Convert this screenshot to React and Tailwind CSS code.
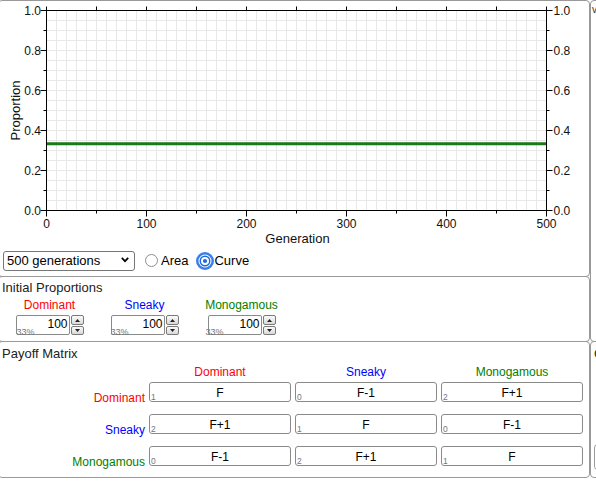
import React from "react";

const SPECIES = [
  { name: "Dominant", color: "text-[#ff0000]", col: "w-[95px]", pct: "left-[1px]" },
  { name: "Sneaky", color: "text-[#0000ff]", col: "w-[95px]", pct: "left-0" },
  { name: "Monogamous", color: "text-[#008000]", col: "w-[99px]", pct: "-left-[2px]" },
];

const MATRIX = [
  [["F", 1], ["F-1", 0], ["F+1", 2]],
  [["F+1", 2], ["F", 1], ["F-1", 0]],
  [["F-1", 0], ["F+1", 2], ["F", 1]],
];

function Chart() {
  const gx = (g) => 46.5 + g;
  const py = (p) => 210.5 - 200 * p;
  const vgrid = Array.from({ length: 49 }, (_, i) => gx(10 * (i + 1)));
  const hgrid = Array.from({ length: 19 }, (_, i) => 10.5 + 10 * (i + 1));
  const yTicks = Array.from({ length: 11 }, (_, i) => i / 10);
  const xTicks = Array.from({ length: 11 }, (_, i) => i * 50);

  return (
    <svg width="589" height="249" className="block ml-px">
      <g transform="translate(0,-1)">
        {vgrid.map((x) => (
          <line key={"v" + x} x1={x} x2={x} y1={10.5} y2={210.5} stroke="#e8e8e8" />
        ))}
        {hgrid.map((y) => (
          <line key={"h" + y} x1={46.5} x2={546.5} y1={y} y2={y} stroke="#e8e8e8" />
        ))}

        {/* three series sit on top of each other at 1/3 */}
        <line x1={gx(0)} x2={gx(500)} y1={py(1 / 3)} y2={py(1 / 3)} stroke="#1a7a1a" strokeWidth="3" />

        <rect x={46.5} y={10.5} width={500} height={200} fill="none" stroke="#000" />

        {yTicks.map((p, i) => {
          const major = i % 2 === 0;
          const len = major ? 6 : 3;
          return (
            <g key={"y" + i}>
              <line x1={46.5 - len} x2={46.5} y1={py(p)} y2={py(p)} stroke="#000" />
              <line x1={546.5} x2={546.5 + len} y1={py(p)} y2={py(p)} stroke="#000" />
              {major && (
                <>
                  <text x={41} y={py(p) + 4.3} fontSize="12" textAnchor="end" fill="#111">
                    {p.toFixed(1)}
                  </text>
                  <text x={553.5} y={py(p) + 4.3} fontSize="12" fill="#111">
                    {p.toFixed(1)}
                  </text>
                </>
              )}
            </g>
          );
        })}

        {xTicks.map((g, i) => {
          const major = i % 2 === 0;
          return (
            <g key={"x" + g}>
              <line x1={gx(g)} x2={gx(g)} y1={6.5} y2={10.5} stroke="#000" />
              <line x1={gx(g)} x2={gx(g)} y1={210.5} y2={210.5 + (major ? 6 : 3)} stroke="#000" />
              {major && (
                <text x={gx(g)} y={227.5} fontSize="12" textAnchor="middle" fill="#111">
                  {g}
                </text>
              )}
            </g>
          );
        })}

        <text x={297.5} y={242.5} fontSize="13" textAnchor="middle" fill="#111">
          Generation
        </text>
        <text
          x={0}
          y={0}
          fontSize="13"
          textAnchor="middle"
          fill="#111"
          transform="translate(20,110.5) rotate(-90)"
        >
          Proportion
        </text>
      </g>
    </svg>
  );
}

function Spinner() {
  return (
    <div className="flex flex-col gap-px ml-px">
      <div className="w-[13px] h-[10px] border border-[#7a7a7a] rounded-[2px] bg-linear-to-b from-[#fbfbfb] to-[#d9d9d9] flex items-center justify-center">
        <svg width="5" height="3">
          <path d="M0 3 L2.5 0 L5 3Z" fill="#222" />
        </svg>
      </div>
      <div className="w-[13px] h-[9px] border border-[#7a7a7a] rounded-[2px] bg-linear-to-b from-[#fbfbfb] to-[#d9d9d9] flex items-center justify-center">
        <svg width="5" height="3">
          <path d="M0 0 L2.5 3 L5 0Z" fill="#222" />
        </svg>
      </div>
    </div>
  );
}

export default function App() {
  return (
    <div className="w-[596px] h-[484px] overflow-hidden bg-white text-[#222] font-['Liberation_Sans',Arial,sans-serif]">
      <div className="flex w-max -ml-[2px]">
        {/* main column */}
        <div className="w-[592px]">
          <div className="h-[277px] border border-[#999] rounded-[4px]">
            <Chart />
            <div className="flex items-center h-[21px]">
              <div className="relative ml-[4px] w-[132px] h-[20px] border border-[#767676] rounded-[3px] bg-white text-[13px] leading-[18px] pl-[3px] text-black">
                500 generations
                <svg className="absolute right-[5px] top-[5px]" width="8" height="6">
                  <path d="M0.8 0.8 L4 4.2 L7.2 0.8" stroke="#000" strokeWidth="1.7" fill="none" />
                </svg>
              </div>
              <svg className="ml-[10px]" width="13" height="13">
                <circle cx="6.5" cy="6.5" r="6" fill="#fff" stroke="#8d8d8d" />
              </svg>
              <span className="ml-[3px] text-[13px] text-black">Area</span>
              <svg className="ml-[8px]" width="18" height="18">
                <circle cx="9" cy="9" r="7.75" fill="none" stroke="#3b7fe8" strokeWidth="2.5" />
                <circle cx="9" cy="9" r="4.75" fill="#fff" stroke="#1b6ae0" strokeWidth="1.5" />
                <circle cx="9" cy="9" r="2.1" fill="#1b6ae0" />
              </svg>
              <span className="text-[13px] text-black">Curve</span>
            </div>
          </div>

          <div className="-mt-px h-[66px] border border-[#999] rounded-[4px] pt-[3px]">
            <div className="pl-[3px] text-[13px] leading-[16px]">Initial Proportions</div>
            <div className="flex ml-[3px] mt-[2px]">
              {SPECIES.map((s) => (
                <div key={s.name} className={`${s.col} flex flex-col items-center`}>
                  <div className={`${s.color} text-[12px] leading-[14px]`}>{s.name}</div>
                  <div className="relative flex mt-[3px]">
                    <div className="relative w-[54px] h-[20px] border border-[#8a8a8a] rounded-[2px] bg-white">
                      <span className="absolute right-px top-px text-[12px] leading-[14px] text-black">100</span>
                    </div>
                    <Spinner />
                    <span className={`absolute ${s.pct} top-[12px] text-[9px] leading-[10px] text-[#777]`}>33%</span>
                  </div>
                </div>
              ))}
            </div>
          </div>

          <div className="-mt-px h-[137px] border border-[#999] rounded-[4px] pt-[4px]">
            <div className="pl-[3px] text-[13px] leading-[16px]">Payoff Matrix</div>
            <div className="grid grid-cols-[146px_142px_142px_142px] gap-x-[4px] mt-[3px]">
              <div />
              {SPECIES.map((s) => (
                <div key={s.name} className={`${s.color} text-center text-[12px] leading-[14px]`}>
                  {s.name}
                </div>
              ))}
            </div>
            <div className="grid grid-cols-[146px_142px_142px_142px] gap-x-[4px] gap-y-[12px] mt-[3px]">
              {MATRIX.map((row, r) => (
                <React.Fragment key={r}>
                  <div className="flex items-end justify-end h-[20px]">
                    <span className={`${SPECIES[r].color} text-[12px] leading-none -mb-[2px]`}>
                      {SPECIES[r].name}
                    </span>
                  </div>
                  {row.map(([v, n], c) => (
                    <div
                      key={c}
                      className="relative h-[20px] border border-[#8a8a8a] rounded-[3px] bg-white text-center text-[12px] leading-[14px] pt-[3px] text-black"
                    >
                      {v}
                      <span className="absolute left-px -bottom-px text-[8.5px] leading-[9px] text-[#777]">{n}</span>
                    </div>
                  ))}
                </React.Fragment>
              ))}
            </div>
          </div>
        </div>

        {/* side column, mostly cut off */}
        <div className="w-[60px]">
          <div className="h-[342px] border border-[#999] rounded-[4px] pl-px pt-[3px] text-[10px] leading-[12px] text-[#333]">
            v
          </div>
          <div className="-mt-px h-[137px] border border-[#999] rounded-[4px] pt-[4px]">
            <div className="pl-[3px] text-[13px] leading-[16px]">Controls</div>
            <div className="ml-[2.5px] mt-[81px] w-[40px] h-[28px] border border-[#999] rounded-[5px]" />
          </div>
        </div>
      </div>
    </div>
  );
}
